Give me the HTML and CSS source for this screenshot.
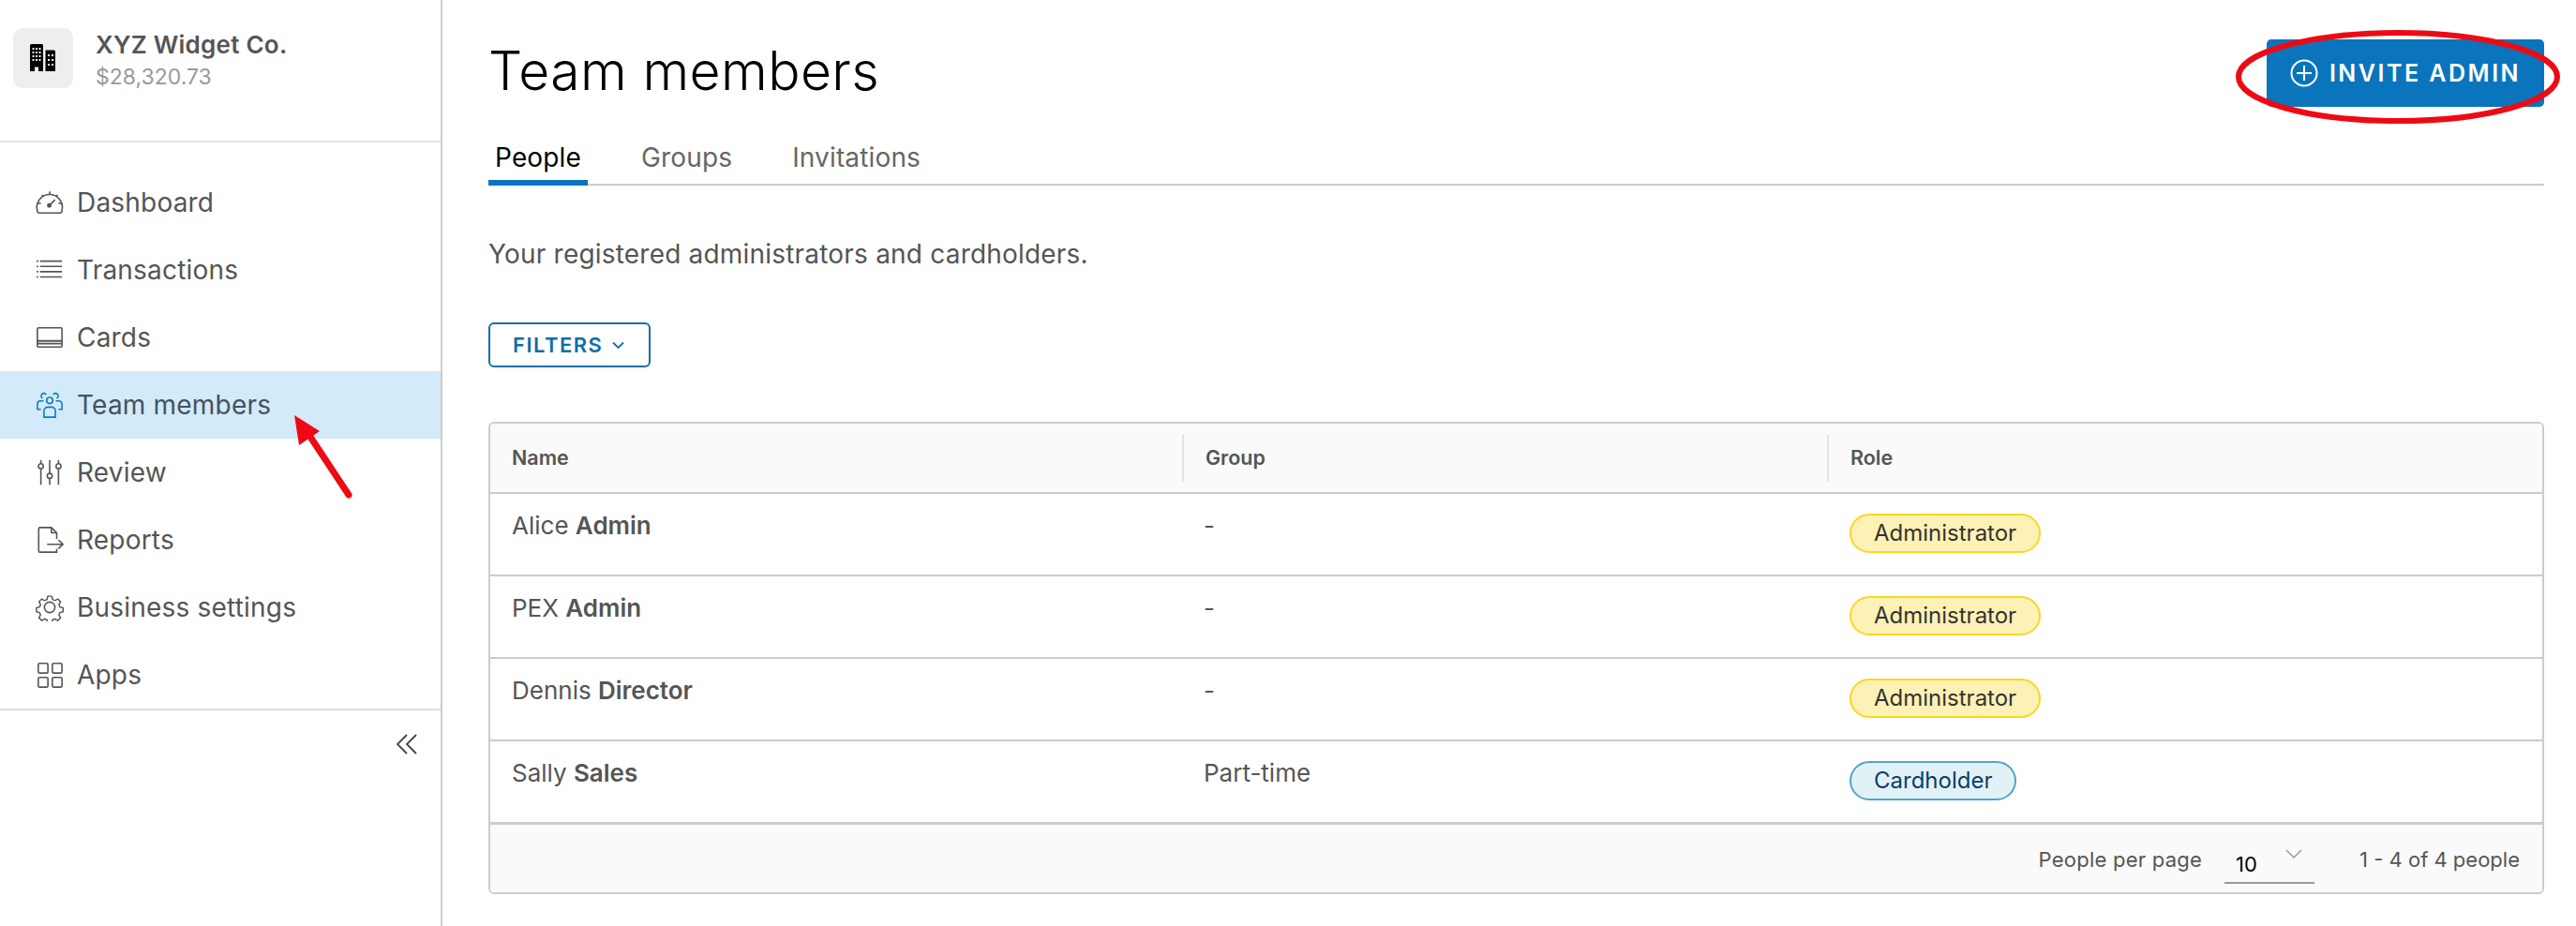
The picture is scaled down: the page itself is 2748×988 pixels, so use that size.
FILE: index.html
```html
<!DOCTYPE html>
<html lang="en">
<head>
<meta charset="utf-8">
<title>Team members</title>
<link rel="stylesheet" href="styles.css">
</head>
<body>
<div class="app">
  <aside class="sidebar">
    <div class="company">
      <div class="company-logo">
        <svg width="30" height="30" viewBox="0 0 30 30"><path fill="#000" d="M1 1.500a1.500 1.500 0 0 1 1.500-1.500h11a1.500 1.500 0 0 1 1.500 1.500V29H10v-4.500H6V29H1z"/><path fill="#000" d="M17.500 6.500h9a1.500 1.500 0 0 1 1.500 1.500v21H17.500z"/><g fill="#eee"><rect x="3.500" y="4" width="2" height="2"/><rect x="7" y="4" width="2" height="2"/><rect x="10.500" y="4" width="2" height="2"/><rect x="3.500" y="8" width="2" height="2"/><rect x="7" y="8" width="2" height="2"/><rect x="10.500" y="8" width="2" height="2"/><rect x="3.500" y="12" width="2" height="2"/><rect x="7" y="12" width="2" height="2"/><rect x="10.500" y="12" width="2" height="2"/><rect x="3.500" y="16" width="2" height="2"/><rect x="7" y="16" width="2" height="2"/><rect x="10.500" y="16" width="2" height="2"/><rect x="20" y="11" width="2" height="2"/><rect x="24" y="11" width="2" height="2"/><rect x="20" y="16" width="2" height="2"/><rect x="24" y="16" width="2" height="2"/><rect x="20" y="21" width="2" height="2"/><rect x="24" y="21" width="2" height="2"/></g></svg>
      </div>
      <div class="company-text">
        <div class="company-name">XYZ Widget Co.</div>
        <div class="company-balance">$28,320.73</div>
      </div>
    </div>
    <nav class="nav">
      <a class="nav-item"><svg class="nav-icon" viewBox="0 0 32 32"><path d="M4 28h24a2 2 0 0 0 1.800-2.500A14.500 14.500 0 1 0 2 25.500 2 2 0 0 0 4 28z"/><path d="M16 3.500v3.500M2.500 17h3.500M26 17h3.500M7 7.500l2 2M25 7.500l-2 2M16 19l6-6"/><circle cx="15.500" cy="19.500" r="1.800" fill="#555"/></svg><span>Dashboard</span></a>
      <a class="nav-item"><svg class="nav-icon" viewBox="0 0 32 32"><path d="M5 6h25M5 12h25M5 18h25M5 24h25M1 6h2M1 12h2M1 18h2M1 24h2"/></svg><span>Transactions</span></a>
      <a class="nav-item"><svg class="nav-icon" viewBox="0 0 32 32"><rect x="2" y="5" width="28" height="22" rx="1.500"/><path d="M2 20h28M2 23h28" stroke-width="2"/></svg><span>Cards</span></a>
      <a class="nav-item nav-item-active"><svg class="nav-icon nav-icon-active" viewBox="0 0 32 32"><circle cx="16" cy="11" r="3.500"/><path d="M9.500 30v-7a4.500 4.500 0 0 1 4.500-4.500h4a4.500 4.500 0 0 1 4.500 4.500v7z"/><path d="M12 4.500a3 3 0 1 0-4 4M20 4.500a3 3 0 1 1 4 4M6 21H2v-6a3.500 3.500 0 0 1 3.500-3.500H9M26 21h4v-6a3.500 3.500 0 0 0-3.500-3.500H23"/></svg><span>Team members</span></a>
      <a class="nav-item"><svg class="nav-icon" viewBox="0 0 32 32"><path d="M6 2v4M6 12v18M16 2v15M16 23v7M26 2v4M26 12v18"/><circle cx="6" cy="9" r="2.800"/><circle cx="16" cy="20" r="2.800"/><circle cx="26" cy="9" r="2.800"/></svg><span>Review</span></a>
      <a class="nav-item"><svg class="nav-icon" viewBox="0 0 32 32"><path d="M24 15V8l-6-6H5a1.500 1.500 0 0 0-1.500 1.500v25A1.500 1.500 0 0 0 5 30h19v-4"/><path d="M18 2v6h6M13 21h18M26 16l5 5-5 5"/></svg><span>Reports</span></a>
      <a class="nav-item"><svg class="nav-icon" viewBox="0 0 32 32"><circle cx="16" cy="16" r="6"/><path d="M13.500 2h5l1 4 3 1.500 3.700-2 3.400 3.600-2.100 3.400 1.200 3 4 1v5l-4 1-1.200 3 2.100 3.500-3.600 3.400-3.500-2.100-3 1.200-1 4h-5l-1-4-3-1.200-3.500 2.100-3.500-3.500 2-3.400-1.200-3-4-1v-5l4-1 1.300-3-2-3.500 3.500-3.500 3.500 2 3-1.300z" transform="translate(1.500 1.500) scale(.91)"/></svg><span>Business settings</span></a>
      <a class="nav-item"><svg class="nav-icon" viewBox="0 0 32 32"><rect x="3" y="3" width="11" height="11" rx="1.500"/><rect x="19" y="3" width="11" height="11" rx="1.500"/><rect x="3" y="19" width="11" height="11" rx="1.500"/><rect x="19" y="19" width="11" height="11" rx="1.500"/></svg><span>Apps</span></a>
    </nav>
    <div class="collapse">
      <svg width="22" height="22" viewBox="0 0 22 22"><path fill="none" stroke="#444" stroke-width="1.800" d="M11 1 1 11l10 10M21 1 11 11l10 10"/></svg>
    </div>
  </aside>
  <main class="main">
    <header class="page-header">
      <h1 class="page-title">Team members</h1>
      <button class="invite-button">
        <svg width="30" height="30" viewBox="0 0 30 30"><circle cx="15" cy="15" r="13.500" fill="none" stroke="#fff" stroke-width="2"/><path d="M15 7v16M7 15h16" stroke="#fff" stroke-width="2"/></svg>
        <span>INVITE ADMIN</span>
      </button>
    </header>
    <div class="tabs">
      <a class="tab tab-active">People</a>
      <a class="tab">Groups</a>
      <a class="tab">Invitations</a>
    </div>
    <p class="intro">Your registered administrators and cardholders.</p>
    <button class="filters-button">
      <span>FILTERS</span>
      <svg width="13" height="9" viewBox="0 0 13 9"><path d="M1 1.500 6.500 7 12 1.500" fill="none" stroke="#0e6ea8" stroke-width="1.800"/></svg>
    </button>
    <section class="table">
      <div class="row head-row">
        <div class="cell">Name</div>
        <div class="cell cell-sep">Group</div>
        <div class="cell cell-sep">Role</div>
      </div>
      <div class="row">
        <div class="cell">Alice <b>Admin</b></div>
        <div class="cell">-</div>
        <div class="cell"><span class="badge badge-admin">Administrator</span></div>
      </div>
      <div class="row">
        <div class="cell">PEX <b>Admin</b></div>
        <div class="cell">-</div>
        <div class="cell"><span class="badge badge-admin">Administrator</span></div>
      </div>
      <div class="row">
        <div class="cell">Dennis <b>Director</b></div>
        <div class="cell">-</div>
        <div class="cell"><span class="badge badge-admin">Administrator</span></div>
      </div>
      <div class="row">
        <div class="cell">Sally <b>Sales</b></div>
        <div class="cell">Part-time</div>
        <div class="cell"><span class="badge badge-holder">Cardholder</span></div>
      </div>
      <footer class="table-footer">
        <span class="per-page">People per page</span>
        <div class="page-select">
          <span class="page-select-value">10</span>
          <svg width="18" height="11" viewBox="0 0 18 11"><path d="M1 1l8 8 8-8" fill="none" stroke="#999" stroke-width="1.500"/></svg>
        </div>
        <span>1 - 4 of 4 people</span>
      </footer>
    </section>
  </main>
</div>
<svg class="annotations" width="2748" height="988" viewBox="0 0 2748 988">
  <path d="M372 528 329 463" fill="none" stroke="#ee0a14" stroke-width="7" stroke-linecap="round"/>
  <path d="M314 443 341 460 319 475z" fill="#ee0a14"/>
  <ellipse cx="2558" cy="82" rx="170" ry="47" fill="none" stroke="#ee0a14" stroke-width="6"/>
</svg>
</body>
</html>
```
FILE: styles.css
```css
* { box-sizing: border-box; }
html, body { margin: 0; padding: 0; background: #fff; }
body {
  font-family: "Inter", "Liberation Sans", sans-serif;
  color: #555;
  height: 988px;
  overflow: hidden;
  position: relative;
}
.app { display: flex; height: 988px; }

.sidebar {
  width: 472px;
  flex: none;
  border-right: 2px solid #ccc;
  display: flex;
  flex-direction: column;
}
.company {
  display: flex;
  gap: 24px;
  height: 152px;
  padding: 30px 0 0 14px;
  border-bottom: 2px solid #e4e4e4;
}
.company-logo {
  width: 64px;
  height: 64px;
  border-radius: 10px;
  background: #eee;
  display: flex;
  align-items: center;
  justify-content: center;
}
.company-name { font-size: 26px; font-weight: 600; line-height: 34px; margin-top: 1px; color: #555; letter-spacing: .25px; }
.company-balance { font-size: 23px; line-height: 34px; color: #999; }
.nav {
  padding-top: 28px;
  border-bottom: 2px solid #ddd;
  display: flex;
  flex-direction: column;
  height: 606px;
}
.nav-item {
  height: 72px;
  display: flex;
  align-items: center;
  gap: 14px;
  padding-left: 38px;
  font-size: 28px;
  letter-spacing: .2px;
  color: #555;
}
.nav-item-active { background: #d2eafa; color: #46525e; }
.nav-icon {
  width: 30px;
  height: 30px;
  flex: none;
  fill: none;
  stroke: #555;
  stroke-width: 1.700;
}
.nav-icon-active { stroke: #0e7cc0; }
.collapse { display: flex; justify-content: flex-end; padding: 25px 25px 0 0; }

.main { flex: 1; min-width: 0; padding: 42px 34px 0 49px; }
.page-header { display: flex; justify-content: space-between; align-items: center; height: 72px; }
.page-title { margin: 0; font-size: 57px; font-weight: 300; letter-spacing: .4px; color: #000; line-height: 72px; position: relative; top: -2px; }
.invite-button {
  width: 296px;
  height: 72px;
  background: #0a75bc;
  border: 0;
  border-radius: 5px;
  color: #fff;
  display: flex;
  align-items: center;
  justify-content: center;
  gap: 12px;
  font: 600 25px "Inter", sans-serif;
  letter-spacing: 2.500px;
}
.tabs {
  display: flex;
  gap: 50px;
  height: 84px;
  align-items: flex-end;
  border-bottom: 2px solid #ccc;
}
.tab {
  padding: 5px 7px 11px;
  height: 54px;
  line-height: 38px;
  font-size: 28px;
  letter-spacing: .15px;
  color: #666;
  margin-bottom: -2px;
}
.tab-active { color: #000; border-bottom: 6px solid #0a75bc; padding-bottom: 5px; }
.intro { margin: 53px 0 0; font-size: 28px; letter-spacing: .2px; line-height: 40px; color: #555; }
.filters-button {
  display: flex;
  align-items: center;
  gap: 10px;
  width: 173px;
  height: 48px;
  margin-top: 53px;
  padding: 0 0 0 24px;
  background: #fff;
  border: 2px solid #0e6ea8;
  border-radius: 6px;
  color: #0e6ea8;
  font: 600 22px "Inter", sans-serif;
  letter-spacing: 1.500px;
}
.table {
  margin-top: 58px;
  border: 2px solid #ccc;
  border-radius: 6px;
  overflow: hidden;
}
.row {
  display: grid;
  grid-template-columns: 738px 688px 1fr;
  height: 88px;
  border-top: 2px solid #ccc;
  font-size: 26px;
  color: #555;
}
.row b { font-weight: 600; }
.cell { padding: 15px 0 0 23px; line-height: 38px; }
.head-row {
  height: 73px;
  border-top: 0;
  background: #fafafa;
  font-size: 21.500px;
  font-weight: 600;
  align-items: center;
}
.head-row .cell { padding: 0 0 0 23px; height: 50px; line-height: 48px; }
.head-row .cell-sep { border-left: 2px solid #e2e2e2; }
.badge {
  display: inline-block;
  height: 42px;
  line-height: 38px;
  padding: 0 24px;
  border-radius: 21px;
  font-size: 24px;
  margin-top: 6px;
  margin-left: 1px;
  vertical-align: top;
}
.badge-admin { background: #fdf1b5; border: 2px solid #fad71e; color: #333; }
.badge-holder { background: #e1f1f6; border: 2px solid #4ea5cf; color: #0a3d6b; }
.table-footer {
  height: 75px;
  border-top: 3px solid #ccc;
  background: #fafafa;
  display: flex;
  align-items: center;
  justify-content: flex-end;
  gap: 24px;
  padding: 2px 24px 0 0;
  font-size: 22px;
  color: #555;
}
.per-page { letter-spacing: .25px; }
.page-select {
  width: 96px;
  height: 45px;
  border-bottom: 2px solid #999;
  display: flex;
  justify-content: space-between;
  padding: 6px 13px 0 12px;
  margin: 4px 24px 0 0;
  position: relative;
  top: 1px;
}
.page-select svg { margin-top: 2px; }
.page-select-value { color: #000; line-height: 36px; }
.annotations { position: absolute; left: 0; top: 0; pointer-events: none; }
```
